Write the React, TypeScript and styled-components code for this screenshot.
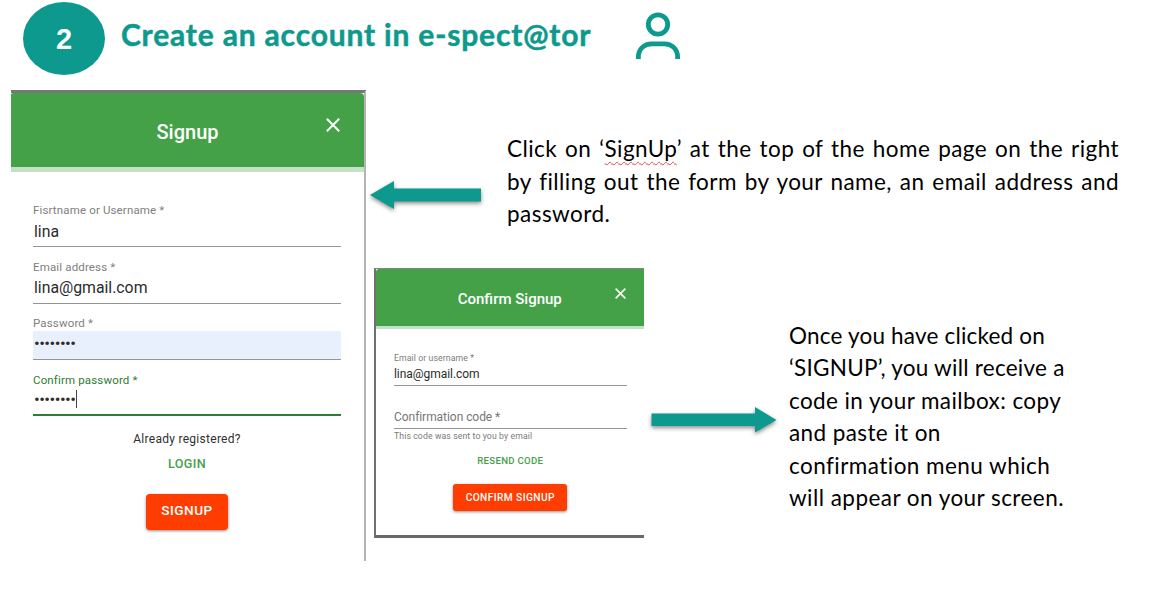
import React from 'react';
import styled, { createGlobalStyle } from 'styled-components';

const TEAL = '#0d998d';
const GREEN = '#45a148';

const GlobalStyle = createGlobalStyle`
  * { box-sizing: border-box; }
  body { margin: 0; background: #fff; font-family: Roboto, sans-serif; }
  p, h1, h2 { margin: 0; font-weight: inherit; }
`;

const Page = styled.main`
  width: 1157px;
  height: 591px;
  overflow: hidden;
  background: #fff;
`;

const Header = styled.header`
  display: flex;
  height: 90px;
  padding: 2px 0 0 23px;
`;

const Step = styled.div`
  width: 82px;
  height: 73px;
  border-radius: 50%;
  background: ${TEAL};
  color: #fff;
  font: bold 29px/74px 'Liberation Sans', sans-serif;
  text-align: center;
`;

const Heading = styled.h1`
  width: 530px;
  padding-left: 16px;
  color: ${TEAL};
  font: 700 30px/65px Lato, sans-serif;
  letter-spacing: 0.82px;
  -webkit-text-stroke: 0.5px ${TEAL};
  white-space: nowrap;
`;

const Body = styled.div`
  display: flex;
`;

const Aside = styled.div`
  display: flex;
  flex-direction: column;
`;

const Row = styled.section`
  display: flex;
`;

const Dialog = styled.section<{ $compact?: boolean }>`
  display: flex;
  flex-direction: column;
  flex: none;
  width: ${p => (p.$compact ? 269.5 : 355)}px;
  height: ${p => (p.$compact ? 270 : 471)}px;
  margin-left: ${p => (p.$compact ? 8 : 11)}px;
  border-style: solid;
  border-color: ${p => (p.$compact ? '#858585 transparent #686a69 #707070' : '#777 #b4b4b4 transparent transparent')};
  border-width: ${p => (p.$compact ? '1px 0 3px 2px' : '3px 2px 0 0')};
`;

const DialogBar = styled.div<{ $compact?: boolean }>`
  display: grid;
  grid-template-columns: 1fr auto 1fr;
  height: ${p => (p.$compact ? 60 : 79)}px;
  flex: none;
  border-bottom: ${p => (p.$compact ? 3 : 5)}px solid #c3e1c4;
  border-radius: ${p => (p.$compact ? '3px 0 0 0' : '2px 4px 0 0')};
  background: ${GREEN};
  color: #fff;
`;

const DialogTitle = styled.h2<{ $compact?: boolean }>`
  grid-column: 2;
  font-size: ${p => (p.$compact ? 15 : 20)}px;
  line-height: ${p => (p.$compact ? 60 : 78)}px;
  font-weight: 500;
`;

const CloseButton = styled.button<{ $compact?: boolean }>`
  justify-self: end;
  align-self: start;
  display: flex;
  margin: ${p => (p.$compact ? '19px 17.5px 0 0' : '24.5px 24px 0 0')};
  padding: 0;
  border: 0;
  background: none;
  color: #fff;
`;

const Form = styled.div<{ $compact?: boolean }>`
  display: flex;
  flex-direction: column;
  padding: ${p => (p.$compact ? '23px 17px 0 18px' : '31px 23px 0 22px')};
`;

const Field = styled.label<{ $focused?: boolean }>`
  display: flex;
  flex-direction: column;
  height: 56.5px;
  color: ${p => (p.$focused ? '#2e7d32' : '#808080')};
`;

const Label = styled.span<{ $compact?: boolean }>`
  font-size: ${p => (p.$compact ? 8.7 : 11.5)}px;
  line-height: ${p => (p.$compact ? 12 : 15)}px;
  letter-spacing: ${p => (p.$compact ? 0.1 : 0.15)}px;
  white-space: nowrap;
`;

const Value = styled.span<{ $filled?: boolean; $focused?: boolean }>`
  display: flex;
  align-items: center;
  height: ${p => (p.$focused ? 28 : 29)}px;
  padding: 0 0 ${p => (p.$filled || p.$focused ? 4 : 2)}px 1px;
  border-bottom: ${p => (p.$focused ? '2px solid #2e7d32' : '1px solid #949494')};
  background: ${p => (p.$filled ? '#e8f0fe' : 'transparent')};
  color: #2b2b2b;
  font-size: 15.8px;
`;

const Dots = styled.span<{ $caret?: boolean }>`
  height: 18px;
  border-right: ${p => (p.$caret ? '1px solid #444' : '0')};
  font-size: 17px;
  line-height: 19px;
  letter-spacing: -0.55px;
`;

const SmallField = styled.label<{ $gap: number }>`
  display: flex;
  flex-direction: column;
  margin-top: ${p => p.$gap}px;
  color: #7b7b7b;
`;

const SmallValue = styled.span<{ $empty?: boolean }>`
  height: 22px;
  margin-bottom: ${p => (p.$empty ? 1 : 0)}px;
  border-bottom: 1px solid #949494;
  color: ${p => (p.$empty ? '#777' : '#2b2b2b')};
  font-size: 12px;
  line-height: 20px;
  letter-spacing: -0.05px;
`;

const Note = styled.p`
  margin-top: 1.5px;
  color: #303030;
  font-size: 12px;
  line-height: 16px;
  letter-spacing: 0.28px;
  text-align: center;
`;

const LinkButton = styled.button<{ $compact?: boolean }>`
  align-self: center;
  margin-top: ${p => (p.$compact ? 12 : 8)}px;
  padding: 0;
  border: 0;
  background: none;
  color: ${GREEN};
  font: 500 ${p => (p.$compact ? '9.6px/14px' : '12.6px/17px')} Roboto, sans-serif;
  letter-spacing: ${p => (p.$compact ? 0.3 : 0.4)}px;
`;

const SubmitButton = styled.button<{ $compact?: boolean }>`
  align-self: center;
  width: ${p => (p.$compact ? 114 : 82)}px;
  height: ${p => (p.$compact ? 27 : 36)}px;
  margin-top: ${p => (p.$compact ? 16 : 22.3)}px;
  padding: ${p => (p.$compact ? '0 0 1px' : '0 0 3px')};
  border: 0;
  border-radius: ${p => (p.$compact ? 3 : 4)}px;
  background: #ff3d00;
  box-shadow: 0 1px 3px rgba(0, 0, 0, 0.45);
  color: #fff;
  font: 500 ${p => (p.$compact ? '10.2px' : '13.6px')} Roboto, sans-serif;
  letter-spacing: ${p => (p.$compact ? 0.4 : 0.5)}px;
  white-space: nowrap;
`;

const Instruction = styled.p<{ $width: number; $justify?: boolean }>`
  width: ${p => p.$width}px;
  color: #000;
  font: 22.5px/32.5px Lato, sans-serif;
  text-align: ${p => (p.$justify ? 'justify' : 'left')};
`;

const Line = styled.span<{ $spacing?: number; $spread?: boolean }>`
  display: block;
  white-space: nowrap;
  letter-spacing: ${p => p.$spacing ?? 0}px;
  text-align-last: ${p => (p.$spread ? 'justify' : 'left')};
`;

const Misspelled = styled.span`
  text-decoration: underline wavy #e8474c 1px;
  text-decoration-skip-ink: none;
  text-underline-offset: 4px;
`;

const TopRow = styled(Row)`
  height: 178px;
  padding: 43px 0 0 3px;
  gap: 26px;
`;

const BottomRow = styled(Row)`
  gap: 6.5px;
`;

const ArrowSlot = styled.div<{ $top: number }>`
  padding-top: ${p => p.$top}px;
`;

const TextSlot = styled.div<{ $top: number }>`
  padding: ${p => p.$top}px 0 0 5.5px;
`;

const Shape = styled.svg`
  display: block;
  overflow: visible;
`;

const ArrowShape = styled(Shape)`
  filter: drop-shadow(0 2px 2px rgba(0, 0, 0, 0.45));
`;

function Close({ size }: { size: number }) {
  return (
    <Shape width={size} height={size} viewBox="0 0 14 14" fill="none" stroke="currentColor" strokeWidth="2">
      <path d="M.8.8l12.4 12.4M13.2.8L.8 13.2" />
    </Shape>
  );
}

function UserIcon() {
  return (
    <Shape width="46" height="60" viewBox="0 0 46 60" fill="none" stroke={TEAL} strokeWidth="4.8">
      <circle cx="23" cy="22.5" r="9.7" />
      <path d="M3.4 57v-2c0-8 6-13.200 13-13.200h13.200c7 0 13 5.200 13 13.200v2" />
    </Shape>
  );
}

export default function App() {
  return (
    <Page>
      <GlobalStyle />
      <Header>
        <Step>2</Step>
        <Heading>Create an account in e-spect@tor</Heading>
        <UserIcon />
      </Header>
      <Body>
        <Dialog>
          <DialogBar>
            <DialogTitle>Signup</DialogTitle>
            <CloseButton aria-label="Close"><Close size={14} /></CloseButton>
          </DialogBar>
          <Form>
            <Field><Label>Fisrtname or Username *</Label><Value>lina</Value></Field>
            <Field><Label>Email address *</Label><Value>lina@gmail.com</Value></Field>
            <Field><Label>Password *</Label><Value $filled><Dots>••••••••</Dots></Value></Field>
            <Field $focused><Label>Confirm password *</Label><Value $focused><Dots $caret>••••••••</Dots></Value></Field>
            <Note>Already registered?</Note>
            <LinkButton>LOGIN</LinkButton>
            <SubmitButton>SIGNUP</SubmitButton>
          </Form>
        </Dialog>
        <Aside>
          <TopRow>
            <ArrowSlot $top={48}>
              <ArrowShape width="112" height="28" viewBox="0 0 112 28" fill={TEAL}>
                <path d="M1 14L25 0v7.5h87v13H25V28z" />
              </ArrowShape>
            </ArrowSlot>
            <Instruction $width={612} $justify>
              <Line $spread $spacing={0.45}>Click on ‘<Misspelled>SignUp</Misspelled>’ at the top of the home page on the right</Line>
              <Line $spread $spacing={0.45}>by filling out the form by your name, an email address and</Line>
              <Line $spacing={0.45}>password.</Line>
            </Instruction>
          </TopRow>
          <BottomRow>
            <Dialog $compact>
              <DialogBar $compact>
                <DialogTitle $compact>Confirm Signup</DialogTitle>
                <CloseButton $compact aria-label="Close"><Close size={11} /></CloseButton>
              </DialogBar>
              <Form $compact>
                <SmallField $gap={0}>
                  <Label $compact>Email or username *</Label>
                  <SmallValue>lina@gmail.com</SmallValue>
                </SmallField>
                <SmallField $gap={21}>
                  <SmallValue $empty>Confirmation code *</SmallValue>
                  <Label $compact>This code was sent to you by email</Label>
                </SmallField>
                <LinkButton $compact>RESEND CODE</LinkButton>
                <SubmitButton $compact>CONFIRM SIGNUP</SubmitButton>
              </Form>
            </Dialog>
            <ArrowSlot $top={137.5}>
              <ArrowShape width="127" height="28" viewBox="0 0 127 28" fill={TEAL}>
                <path d="M1.5 7.5H105V1l21.500 13L105 26.500V20H1.500z" />
              </ArrowShape>
            </ArrowSlot>
            <TextSlot $top={51.5}>
              <Instruction $width={300}>
                <Line $spacing={0.2}>Once you have clicked on</Line>
                <Line $spacing={0.25}>‘SIGNUP’, you will receive a</Line>
                <Line $spacing={0.4}>code in your mailbox: copy</Line>
                <Line $spacing={0.4}>and paste it on</Line>
                <Line $spacing={0.45}>confirmation menu which</Line>
                <Line $spacing={0.45}>will appear on your screen.</Line>
              </Instruction>
            </TextSlot>
          </BottomRow>
        </Aside>
      </Body>
    </Page>
  );
}
